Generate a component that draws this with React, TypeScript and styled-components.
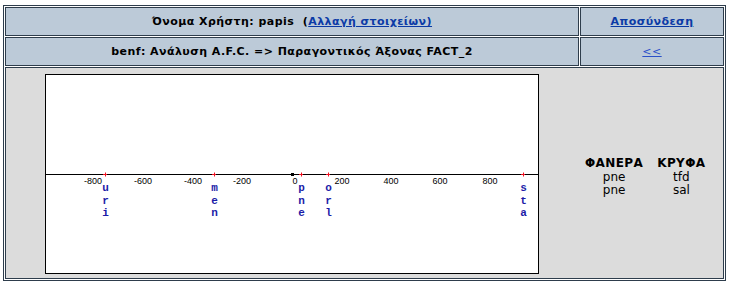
import styled, { createGlobalStyle } from 'styled-components';

const GlobalStyle = createGlobalStyle`
  body {
    margin: 0;
    background: #ffffff;
  }
`;

const Frame = styled.div`
  margin: 5px 0 0 3px;
  width: 723px;
  box-sizing: border-box;
  border: 1px solid #2e3d4c;
  padding: 1px;
  display: grid;
  grid-template-columns: 574px 144px;
  grid-template-rows: 29px 29px 212px;
  gap: 1px;
  font-family: 'DejaVu Sans', Verdana, sans-serif;
`;

const HeadCell = styled.div`
  box-sizing: border-box;
  border: 1px solid #2e3d4c;
  background: #bccad8;
  display: flex;
  align-items: center;
  justify-content: center;
  font-size: 11px;
  font-weight: bold;
  letter-spacing: 0.45px;
  color: #000;
  white-space: pre;
`;

const Link = styled.a<{ $light?: boolean }>`
  color: ${(p) => (p.$light ? '#2a4fc8' : '#0b3aa6')};
  font-weight: ${(p) => (p.$light ? 'normal' : 'bold')};
  text-decoration: underline;
  cursor: pointer;
`;

const BodyCell = styled.div`
  grid-column: 1 / span 2;
  box-sizing: border-box;
  border: 1px solid #2e3d4c;
  background: #dcdcdc;
  display: flex;
  align-items: flex-start;
  padding: 6px 0 0 39px;
`;

const Chart = styled.svg`
  display: block;
  flex: none;
  background: #ffffff;
`;

const Legend = styled.div`
  align-self: center;
  margin: 3px 0 0 46px;
  display: grid;
  grid-template-columns: auto auto;
  column-gap: 14px;
  font-size: 12px;
  line-height: 13.5px;
  text-align: center;
  color: #000;
`;

const LegendHead = styled.div`
  font-weight: bold;
  letter-spacing: 0.4px;
`;

const ticks = [
  { label: '-800', x: 48 },
  { label: '-600', x: 98 },
  { label: '-400', x: 148 },
  { label: '-200', x: 197 },
  { label: '0', x: 250 },
  { label: '200', x: 297 },
  { label: '400', x: 346 },
  { label: '600', x: 395 },
  { label: '800', x: 445 },
];

const points = [
  { name: 'uri', x: 60 },
  { name: 'men', x: 169 },
  { name: 'pne', x: 256 },
  { name: 'orl', x: 283 },
  { name: 'sta', x: 478 },
];

function AxisChart() {
  return (
    <Chart width={494} height={200} viewBox="0 0 494 200">
      <rect x={0.5} y={0.5} width={493} height={199} fill="#fff" stroke="#000" />
      <line x1={0} y1={100.5} x2={494} y2={100.5} stroke="#000" />
      <rect x={246} y={99} width={3} height={3} fill="#000" />
      {ticks.map((t) => (
        <text
          key={t.label}
          x={t.x}
          y={109.5}
          fontFamily="'Liberation Sans', Arial, sans-serif"
          fontSize={9}
          textAnchor="middle"
          fill="#000"
        >
          {t.label}
        </text>
      ))}
      {points.map((p) => (
        <g key={p.name}>
          <path
            d={`M${p.x - 2} 100.5 h4 M${p.x + 0.5} 98.5 v4`}
            stroke="#f01020"
            strokeWidth={1}
          />
          {p.name.split('').map((ch, i) => (
            <text
              key={i}
              x={p.x + 0.5}
              y={117 + i * 12.5}
              fontFamily="'Liberation Mono', 'Courier New', monospace"
              fontSize={11}
              fontWeight="bold"
              textAnchor="middle"
              fill="#1c1ca8"
            >
              {ch}
            </text>
          ))}
        </g>
      ))}
    </Chart>
  );
}

export default function App() {
  return (
    <>
      <GlobalStyle />
      <Frame>
        <HeadCell>
          {'Όνομα Χρήστη: papis  ('}
          <Link>Αλλαγή στοιχείων)</Link>
        </HeadCell>
        <HeadCell>
          <Link>Αποσύνδεση</Link>
        </HeadCell>
        <HeadCell>benf: Ανάλυση A.F.C. =&gt; Παραγοντικός Άξονας FACT_2</HeadCell>
        <HeadCell>
          <Link $light>&lt;&lt;</Link>
        </HeadCell>
        <BodyCell>
          <AxisChart />
          <Legend>
            <LegendHead>ΦΑΝΕΡΑ</LegendHead>
            <LegendHead>ΚΡΥΦΑ</LegendHead>
            <div>pne</div>
            <div>tfd</div>
            <div>pne</div>
            <div>sal</div>
          </Legend>
        </BodyCell>
      </Frame>
    </>
  );
}
